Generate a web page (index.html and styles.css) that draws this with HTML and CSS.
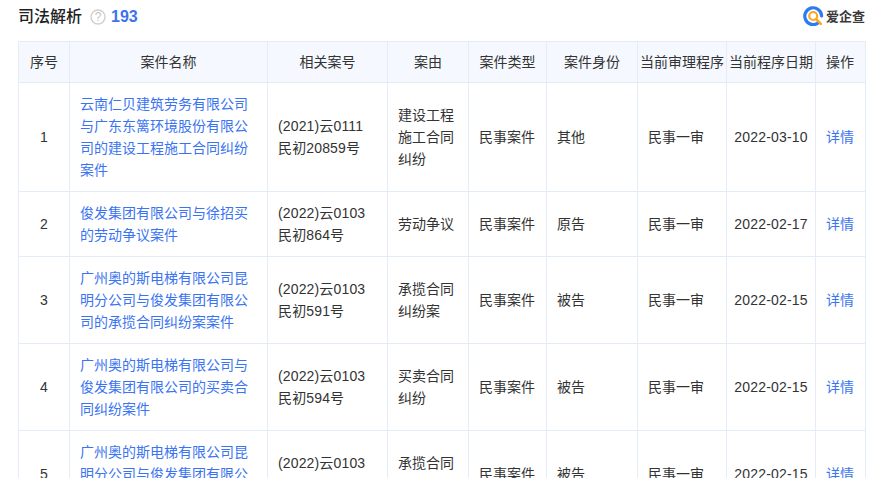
FILE: index.html
```html
<!DOCTYPE html>
<html lang="zh-CN">
<head>
<meta charset="utf-8">
<title>司法解析</title>
<link rel="stylesheet" href="styles.css">
</head>
<body>
<div class="page">
  <header class="bar">
    <div class="heading">
      <h2 class="title">司法解析</h2>
      <svg class="help" width="16" height="16" viewBox="0 0 16 16"><circle cx="8" cy="8" r="7" fill="none" stroke="#cfcfcf" stroke-width="1.4"/><text x="8" y="12" text-anchor="middle" class="help-mark">?</text></svg>
      <span class="count">193</span>
    </div>
    <div class="logo">
      <svg width="21" height="20" viewBox="0 0 21 20"><path d="M14.5 17.4A8.4 8.4 0 1 1 18.6 10" fill="none" stroke="#2b7bf6" stroke-width="3.2" stroke-linecap="round"/><circle cx="10.2" cy="10" r="4" fill="none" stroke="#f9a825" stroke-width="2.2"/><path d="M13 13l4.8 4.8" stroke="#f9a825" stroke-width="2.6" stroke-linecap="round"/></svg>
      <span class="logo-text">爱企查</span>
    </div>
  </header>
  <table class="grid">
    <colgroup>
      <col class="c1"><col class="c2"><col class="c3"><col class="c4"><col class="c5"><col class="c6"><col class="c7"><col class="c8"><col class="c9">
    </colgroup>
    <thead>
      <tr><th>序号</th><th>案件名称</th><th>相关案号</th><th>案由</th><th>案件类型</th><th>案件身份</th><th>当前审理程序</th><th>当前程序日期</th><th class="action-head">操作</th></tr>
    </thead>
    <tbody>
      <tr><td class="mid">1</td><td><a class="link">云南仁贝建筑劳务有限公司与广东东篱环境股份有限公司的建设工程施工合同纠纷案件</a></td><td class="num">(2021)云0111<br>民初20859号</td><td>建设工程施工合同纠纷</td><td>民事案件</td><td>其他</td><td>民事一审</td><td class="date">2022-03-10</td><td class="action"><a class="link">详情</a></td></tr>
      <tr><td class="mid">2</td><td><a class="link">俊发集团有限公司与徐招买的劳动争议案件</a></td><td class="num">(2022)云0103<br>民初864号</td><td>劳动争议</td><td>民事案件</td><td>原告</td><td>民事一审</td><td class="date">2022-02-17</td><td class="action"><a class="link">详情</a></td></tr>
      <tr><td class="mid">3</td><td><a class="link">广州奥的斯电梯有限公司昆明分公司与俊发集团有限公司的承揽合同纠纷案案件</a></td><td class="num">(2022)云0103<br>民初591号</td><td>承揽合同纠纷案</td><td>民事案件</td><td>被告</td><td>民事一审</td><td class="date">2022-02-15</td><td class="action"><a class="link">详情</a></td></tr>
      <tr><td class="mid">4</td><td><a class="link">广州奥的斯电梯有限公司与俊发集团有限公司的买卖合同纠纷案件</a></td><td class="num">(2022)云0103<br>民初594号</td><td>买卖合同纠纷</td><td>民事案件</td><td>被告</td><td>民事一审</td><td class="date">2022-02-15</td><td class="action"><a class="link">详情</a></td></tr>
      <tr><td class="mid">5</td><td><a class="link">广州奥的斯电梯有限公司昆明分公司与俊发集团有限公司的承揽合同纠纷案件</a></td><td class="num">(2022)云0103<br>民初592号</td><td>承揽合同纠纷</td><td>民事案件</td><td>被告</td><td>民事一审</td><td class="date">2022-02-15</td><td class="action"><a class="link">详情</a></td></tr>
    </tbody>
  </table>
</div>
</body>
</html>
```
FILE: styles.css
```css
html, body {
  margin: 0;
  padding: 0;
  height: 478px;
  overflow: hidden;
  background: #fff;
}
body {
  font-family: "Liberation Sans", "Noto Sans CJK SC", sans-serif;
  font-size: 14px;
  color: #333;
}
.page {
  padding: 0 18px;
}
.bar {
  display: flex;
  justify-content: space-between;
  align-items: center;
  height: 41px;
  padding-bottom: 8px;
  box-sizing: border-box;
}
.heading {
  display: flex;
  align-items: center;
}
.title {
  margin: 0;
  font-size: 16px;
  font-weight: 500;
  color: #222;
  line-height: 32px;
}
.help {
  margin-left: 8px;
}
.help-mark {
  font-size: 12px;
  fill: #c4c4c4;
}
.count {
  margin-left: 5px;
  font-size: 16px;
  font-weight: 700;
  color: #3b73f0;
}
.logo {
  display: flex;
  align-items: center;
  gap: 2px;
  padding-bottom: 2px;
}
.logo-text {
  font-size: 13px;
  font-weight: 700;
  color: #3a3a3a;
}
.grid {
  width: 847px;
  table-layout: fixed;
  border-collapse: collapse;
  line-height: 22px;
}
.grid th, .grid td {
  border: 1px solid #e4ecf8;
  vertical-align: middle;
  word-break: break-all;
}
.grid td {
  padding: 10px;
}
.grid th {
  background: #f5f9ff;
  font-weight: 400;
  text-align: center;
  padding: 9px 0;
}
.grid .action-head {
  padding-right: 1px;
}
.mid {
  text-align: center;
}
.grid .num {
  letter-spacing: 0.15px;
}
.grid .date {
  padding: 10px 0;
  text-align: center;
  white-space: nowrap;
  letter-spacing: 0.2px;
}
.grid .action {
  padding: 10px 1px 10px 0;
  text-align: center;
}
.link {
  color: #3a74f2;
}
.c1 { width: 51px; }
.c2 { width: 198px; }
.c3 { width: 120px; }
.c4 { width: 81px; }
.c5 { width: 78px; }
.c6 { width: 91px; }
.c7 { width: 89px; }
.c8 { width: 89px; }
.c9 { width: 50px; }
```
